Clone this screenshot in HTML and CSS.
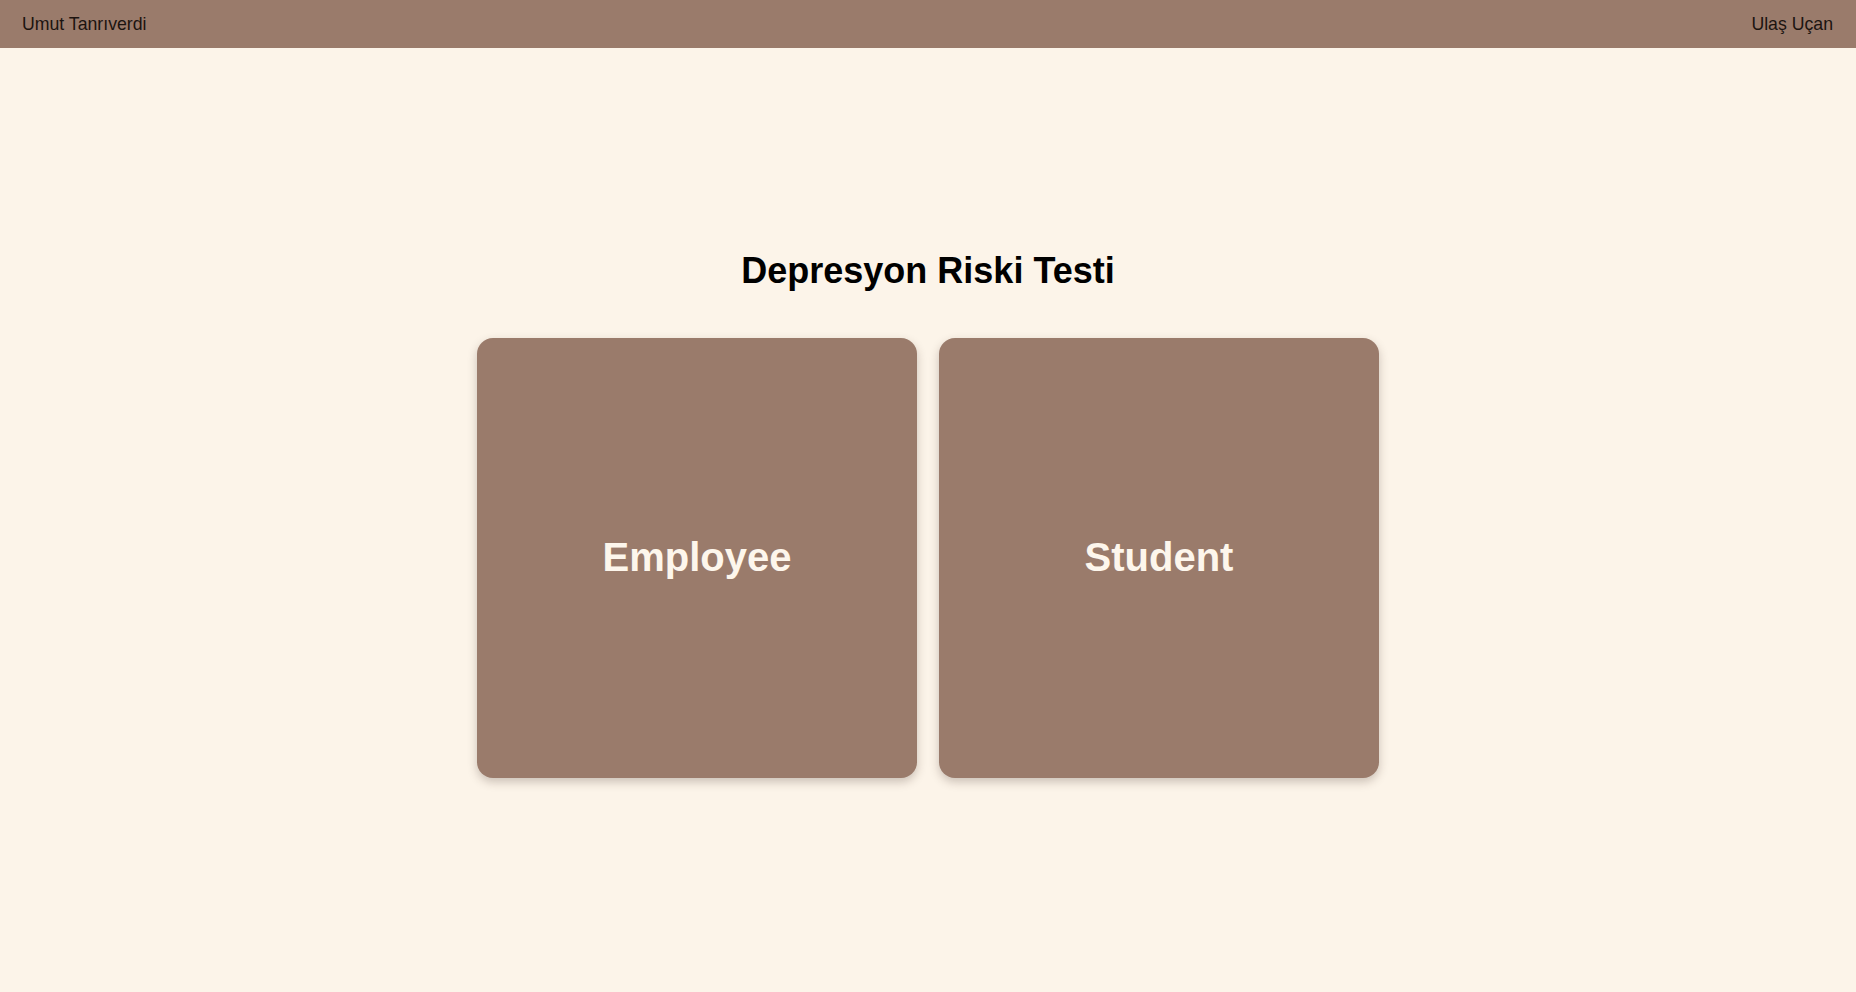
FILE: index.html
```html
<!DOCTYPE html>
<html lang="tr">
<head>
<meta charset="utf-8">
<title>Depresyon Riski Testi</title>
<link rel="stylesheet" href="styles.css">
</head>
<body>
<header class="topbar">
  <span class="name">Umut Tanrıverdi</span>
  <span class="name">Ulaş Uçan</span>
</header>
<main class="main">
  <h1 class="title">Depresyon Riski Testi</h1>
  <div class="cards">
    <div class="card">Employee</div>
    <div class="card">Student</div>
  </div>
</main>
</body>
</html>
```
FILE: styles.css
```css
html, body {
  margin: 0;
  padding: 0;
}
body {
  background: #fcf4e9;
  font-family: "Liberation Sans", Arial, sans-serif;
  color: #000;
  min-height: 992px;
}
.topbar {
  height: 48px;
  background: #9a7b6b;
  display: flex;
  align-items: center;
  justify-content: space-between;
  padding: 0 23px 0 22px;
  box-sizing: border-box;
}
.name {
  font-size: 17.7px;
  color: #1c1410;
}
.main {
  display: flex;
  flex-direction: column;
  align-items: center;
  padding-top: 203px;
}
.title {
  margin: 0 0 47px;
  font-size: 36px;
  line-height: 40px;
  font-weight: bold;
}
.cards {
  display: flex;
  gap: 22px;
}
.card {
  width: 440px;
  height: 440px;
  background: #9a7b6b;
  border-radius: 16px;
  box-shadow: 0 4px 10px rgba(60, 40, 30, 0.25);
  display: flex;
  align-items: center;
  justify-content: center;
  color: #fdf6ec;
  font-size: 40px;
  font-weight: bold;
  padding-bottom: 2px;
  box-sizing: border-box;
}
```
